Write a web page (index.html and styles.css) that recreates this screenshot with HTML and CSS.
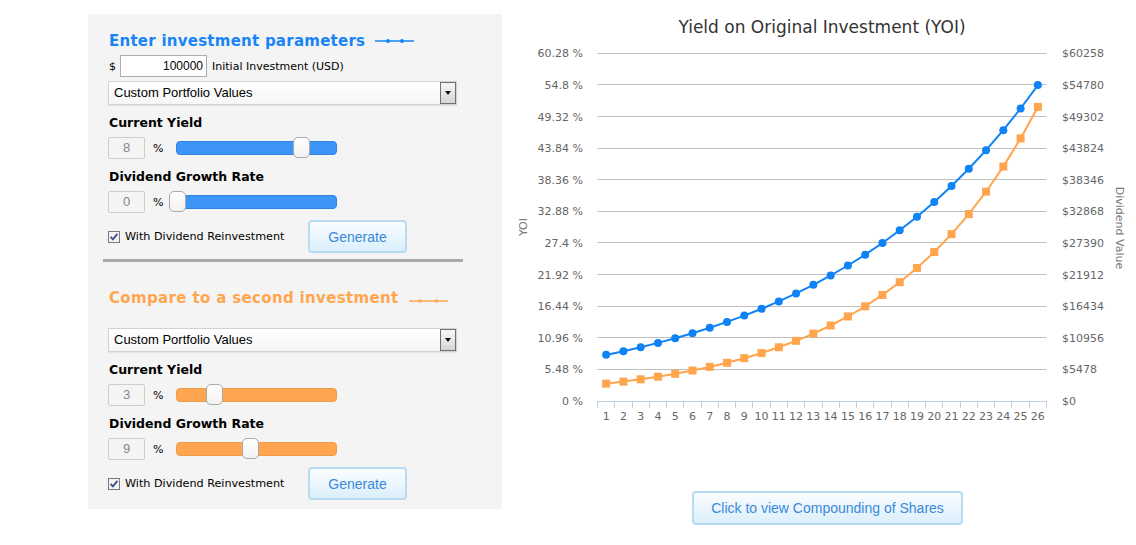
FILE: index.html
```html
<!DOCTYPE html>
<html lang="en">
<head>
  <meta charset="UTF-8">
  <meta name="viewport" content="width=device-width, initial-scale=1.0">
  <title>Yield on Original Investment</title>
  <link rel="stylesheet" href="styles.css">
</head>
<body>
  <div class="page">
    <!-- Parameters Panel -->
    <div class="panel">
      <div class="heading heading-blue">
        <span>Enter investment parameters</span>
        <svg class="legend-icon" width="40" height="8" viewBox="0 0 40 8">
          <line x1="0" y1="4" x2="39" y2="4" stroke="#1884f6" stroke-width="1.3"/>
          <circle cx="13" cy="4" r="2" fill="#1884f6"/>
          <circle cx="27" cy="4" r="2" fill="#1884f6"/>
        </svg>
      </div>

      <div class="amount-row">
        <span>$</span>
        <input class="amount" type="text" value="100000">
        <span class="amount-label">Initial Investment (USD)</span>
      </div>

      <div class="select">
        <span class="select-text">Custom Portfolio Values</span>
        <span class="select-arrow"></span>
      </div>

      <div class="field-label">Current Yield</div>
      <div class="slider-row">
        <div class="value-box">8</div>
        <span class="percent">%</span>
        <div class="slider slider-blue"><span class="handle" style="left: 78%"></span></div>
      </div>

      <div class="field-label">Dividend Growth Rate</div>
      <div class="slider-row">
        <div class="value-box">0</div>
        <span class="percent">%</span>
        <div class="slider slider-blue"><span class="handle" style="left: 0%"></span></div>
      </div>

      <div class="action-row">
        <label class="check-label">
          <svg class="check-box" width="12" height="12" viewBox="0 0 12 12">
            <rect x="0.5" y="0.5" width="11" height="11" fill="#f3f3f3" stroke="#7a7a7a"/>
            <path d="M2.6 5.8 L4.9 8.3 L9.4 2.9" fill="none" stroke="#3b4f8a" stroke-width="1.8"/>
          </svg>
          With Dividend Reinvestment
        </label>
        <button class="btn btn-generate" type="button">Generate</button>
      </div>

      <div class="divider"></div>

      <!-- Second Investment -->
      <div class="heading heading-orange">
        <span>Compare to a second investment</span>
        <svg class="legend-icon" width="40" height="8" viewBox="0 0 40 8">
          <line x1="0" y1="4" x2="39" y2="4" stroke="#ffa64f" stroke-width="1.3"/>
          <rect x="9.5" y="2.5" width="3" height="3" fill="#ffa64f"/>
          <rect x="26" y="2.5" width="3" height="3" fill="#ffa64f"/>
        </svg>
      </div>

      <div class="select">
        <span class="select-text">Custom Portfolio Values</span>
        <span class="select-arrow"></span>
      </div>

      <div class="field-label">Current Yield</div>
      <div class="slider-row">
        <div class="value-box">3</div>
        <span class="percent">%</span>
        <div class="slider slider-orange"><span class="handle" style="left: 23%"></span></div>
      </div>

      <div class="field-label">Dividend Growth Rate</div>
      <div class="slider-row">
        <div class="value-box">9</div>
        <span class="percent">%</span>
        <div class="slider slider-orange"><span class="handle" style="left: 45.6%"></span></div>
      </div>

      <div class="action-row">
        <label class="check-label">
          <svg class="check-box" width="12" height="12" viewBox="0 0 12 12">
            <rect x="0.5" y="0.5" width="11" height="11" fill="#f3f3f3" stroke="#7a7a7a"/>
            <path d="M2.6 5.8 L4.9 8.3 L9.4 2.9" fill="none" stroke="#3b4f8a" stroke-width="1.8"/>
          </svg>
          With Dividend Reinvestment
        </label>
        <button class="btn btn-generate" type="button">Generate</button>
      </div>
    </div>

    <!-- Chart -->
    <div class="chart-col">
      <svg id="chart" class="chart" width="634" height="440" viewBox="502 0 634 440"></svg>
      <button class="btn btn-shares" type="button">Click to view Compounding of Shares</button>
    </div>
  </div>

  <script>
    const svgNS = 'http://www.w3.org/2000/svg';
    const chart = document.getElementById('chart');

    // Small helper to add an svg element
    function add(tag, attrs, text) {
      const el = document.createElementNS(svgNS, tag);
      for (const key in attrs) el.setAttribute(key, attrs[key]);
      if (text !== undefined) el.textContent = text;
      chart.appendChild(el);
      return el;
    }

    const plotLeft = 597.5;
    const plotRight = 1046.5;
    const plotTop = 53.4;
    const plotBottom = 401;
    const step = 5.48;
    const maxYield = step * 11;
    const years = 26;
    const colWidth = (plotRight - plotLeft) / years;

    function xAt(i) { return plotLeft + (i + 0.5) * colWidth; }
    function yAt(v) { return plotBottom - v / maxYield * (plotBottom - plotTop); }

    // Title
    add('text', { x: 822, y: 33, 'text-anchor': 'middle', class: 'chart-title' },
      'Yield on Original Investment (YOI)');

    // Grid lines and axis labels
    for (let k = 0; k <= 11; k++) {
      const y = yAt(k * step);
      const lineY = Math.floor(y) + 0.5;
      if (k > 0) {
        add('line', { x1: plotLeft, y1: lineY, x2: plotRight, y2: lineY, class: 'grid' });
      }
      add('text', { x: 583, y: Math.round(y) + 4, 'text-anchor': 'end' },
        Number((k * step).toFixed(2)) + ' %');
      add('text', { x: 1062, y: Math.round(y) + 4 }, '$' + k * 5478);
    }

    // Axis titles
    add('text', { transform: 'translate(527,227) rotate(-90)', 'text-anchor': 'middle', class: 'axis-title' }, 'YOI');
    add('text', { transform: 'translate(1116,228) rotate(90)', 'text-anchor': 'middle', class: 'axis-title' }, 'Dividend Value');

    // X axis
    add('line', { x1: plotLeft, y1: 401.5, x2: plotRight, y2: 401.5, class: 'axis' });
    for (let k = 0; k <= years; k++) {
      const x = Math.floor(plotLeft + k * colWidth) + 0.5;
      add('line', { x1: x, y1: 401, x2: x, y2: 408, class: 'axis' });
    }
    for (let i = 0; i < years; i++) {
      add('text', { x: xAt(i), y: 420, 'text-anchor': 'middle' }, i + 1);
    }

    // Series: yield compounds by (yield + growth) each year
    function series(yieldPct, growthPct) {
      const values = [];
      for (let i = 0; i < years; i++) {
        values.push(yieldPct * Math.pow(1 + (yieldPct + growthPct) / 100, i));
      }
      return values;
    }

    function drawSeries(values, color, marker) {
      const pts = values.map((v, i) => xAt(i).toFixed(1) + ',' + yAt(v).toFixed(1)).join(' ');
      add('polyline', { points: pts, fill: 'none', stroke: color, 'stroke-width': 2 });
      values.forEach((v, i) => {
        if (marker === 'circle') {
          add('circle', { cx: xAt(i), cy: yAt(v), r: 4, fill: color });
        } else {
          add('rect', { x: xAt(i) - 4, y: yAt(v) - 4, width: 8, height: 8, fill: color });
        }
      });
    }

    drawSeries(series(8, 0), '#0f82f5', 'circle');
    drawSeries(series(3, 9), '#ffa54d', 'square');
  </script>
</body>
</html>
```

FILE: styles.css
```css
/* Reset */
* {
  margin: 0;
  padding: 0;
  box-sizing: border-box;
}

body {
  background-color: #fff;
  font-family: "DejaVu Sans", Verdana, sans-serif;
  color: #000;
}

/* Page Layout */
.page {
  display: flex;
  align-items: flex-start;
  width: 1136px;
  height: 545px;
  overflow: hidden;
}

/* Parameters Panel */
.panel {
  flex-shrink: 0;
  width: 414px;
  height: 495px;
  margin: 14px 0 0 88px;
  padding: 17px 20px 0;
  background-color: #f4f4f4;
}

.heading {
  display: flex;
  align-items: flex-start;
  height: 20px;
  padding-left: 1px;
  font-size: 15px;
  font-weight: bold;
  line-height: 20px;
  letter-spacing: 0.25px;
  white-space: nowrap;
}

.heading-blue {
  color: #1884f6;
}

.heading-orange {
  margin-top: 26px;
  color: #ffa64f;
  letter-spacing: 0.35px;
}

.legend-icon {
  flex-shrink: 0;
  margin: 6px 0 0 10px;
}

.heading-orange .legend-icon {
  margin-top: 9px;
  margin-left: 10px;
}

/* Initial Investment */
.amount-row {
  display: flex;
  align-items: center;
  height: 22px;
  margin-top: 4px;
  padding-left: 1px;
  font-size: 11px;
}

.amount {
  width: 87px;
  height: 22px;
  margin-left: 4px;
  padding-right: 3px;
  border: 1px solid #adadad;
  background-color: #fff;
  font-family: "Liberation Sans", Arial, sans-serif;
  font-size: 12px;
  color: #000;
  text-align: right;
  outline: none;
}

.amount-label {
  margin-left: 5px;
}

/* Select Box */
.select {
  display: flex;
  width: 349px;
  height: 24px;
  margin-top: 4px;
  border: 1px solid #d2d2d2;
  background: linear-gradient(#fff, #f6f6f6);
  box-shadow: 0 1px 1px rgba(0, 0, 0, 0.06);
  font-family: "Liberation Sans", Arial, sans-serif;
  font-size: 13px;
}

.heading-orange + .select {
  margin-top: 20px;
}

.select-text {
  flex: 1;
  padding-left: 5px;
  line-height: 22px;
}

.select-arrow {
  display: flex;
  align-items: center;
  justify-content: center;
  width: 16px;
  border: 1px solid #707070;
  background: linear-gradient(#f7f7f7, #d6d6d6);
}

.select-arrow::after {
  content: "";
  border-left: 3.5px solid transparent;
  border-right: 3.5px solid transparent;
  border-top: 4px solid #111;
}

/* Sliders */
.field-label {
  height: 16px;
  margin-top: 10px;
  padding-left: 1px;
  font-size: 12.5px;
  font-weight: bold;
  line-height: 16px;
}

.slider-row {
  display: flex;
  align-items: center;
  height: 22px;
  margin-top: 6px;
}

.value-box {
  width: 37px;
  height: 22px;
  border: 1px solid #cdcdcd;
  border-radius: 2px;
  font-family: "Liberation Sans", Arial, sans-serif;
  font-size: 13px;
  line-height: 20px;
  color: #888;
  text-align: center;
}

.percent {
  margin-left: 8px;
  font-size: 11px;
}

.slider {
  position: relative;
  width: 161px;
  height: 14px;
  margin-left: 13px;
  border: 1px solid;
  border-radius: 4px;
}

.slider-blue {
  background-color: #3d96f7;
  border-color: #2f84e6;
}

.slider-orange {
  background-color: #ffa54f;
  border-color: #eb9d4c;
}

.handle {
  position: absolute;
  top: -5px;
  width: 17px;
  height: 21px;
  margin-left: -8px;
  border: 1px solid #a9a9a9;
  border-radius: 5px;
  background: linear-gradient(#fff, #f2f2f2);
}

/* Checkbox and Button Row */
.action-row {
  display: flex;
  align-items: center;
  height: 33px;
  margin-top: 7px;
}

.check-label {
  display: flex;
  align-items: center;
  width: 200px;
  font-size: 11.2px;
}

.check-box {
  flex-shrink: 0;
  margin-right: 5px;
}

.btn {
  border: 2px solid #b8dbf1;
  border-radius: 4px;
  background: linear-gradient(#fafdff, #dbeffb);
  font-family: "Liberation Sans", Arial, sans-serif;
  font-size: 14px;
  color: #3a8ad9;
  cursor: pointer;
}

.btn-generate {
  width: 99px;
  height: 33px;
}

.divider {
  width: 360px;
  height: 3px;
  margin: 6px 0 0 -5px;
  background-color: #aaa;
}

/* Chart Column */
.chart-col {
  display: flex;
  flex-direction: column;
  align-items: center;
  width: 634px;
}

.chart {
  display: block;
}

.chart text {
  font-family: "DejaVu Sans", Verdana, sans-serif;
  font-size: 11px;
  fill: #666;
}

.chart .chart-title {
  font-size: 17px;
  fill: #333;
}

.chart .axis-title {
  fill: #777;
}

.grid {
  stroke: #c0c0c0;
  stroke-width: 1;
}

.axis {
  stroke: #c0d0e0;
  stroke-width: 1;
}

.btn-shares {
  width: 271px;
  height: 34px;
  margin: 51px 0 0 17px;
}
```
